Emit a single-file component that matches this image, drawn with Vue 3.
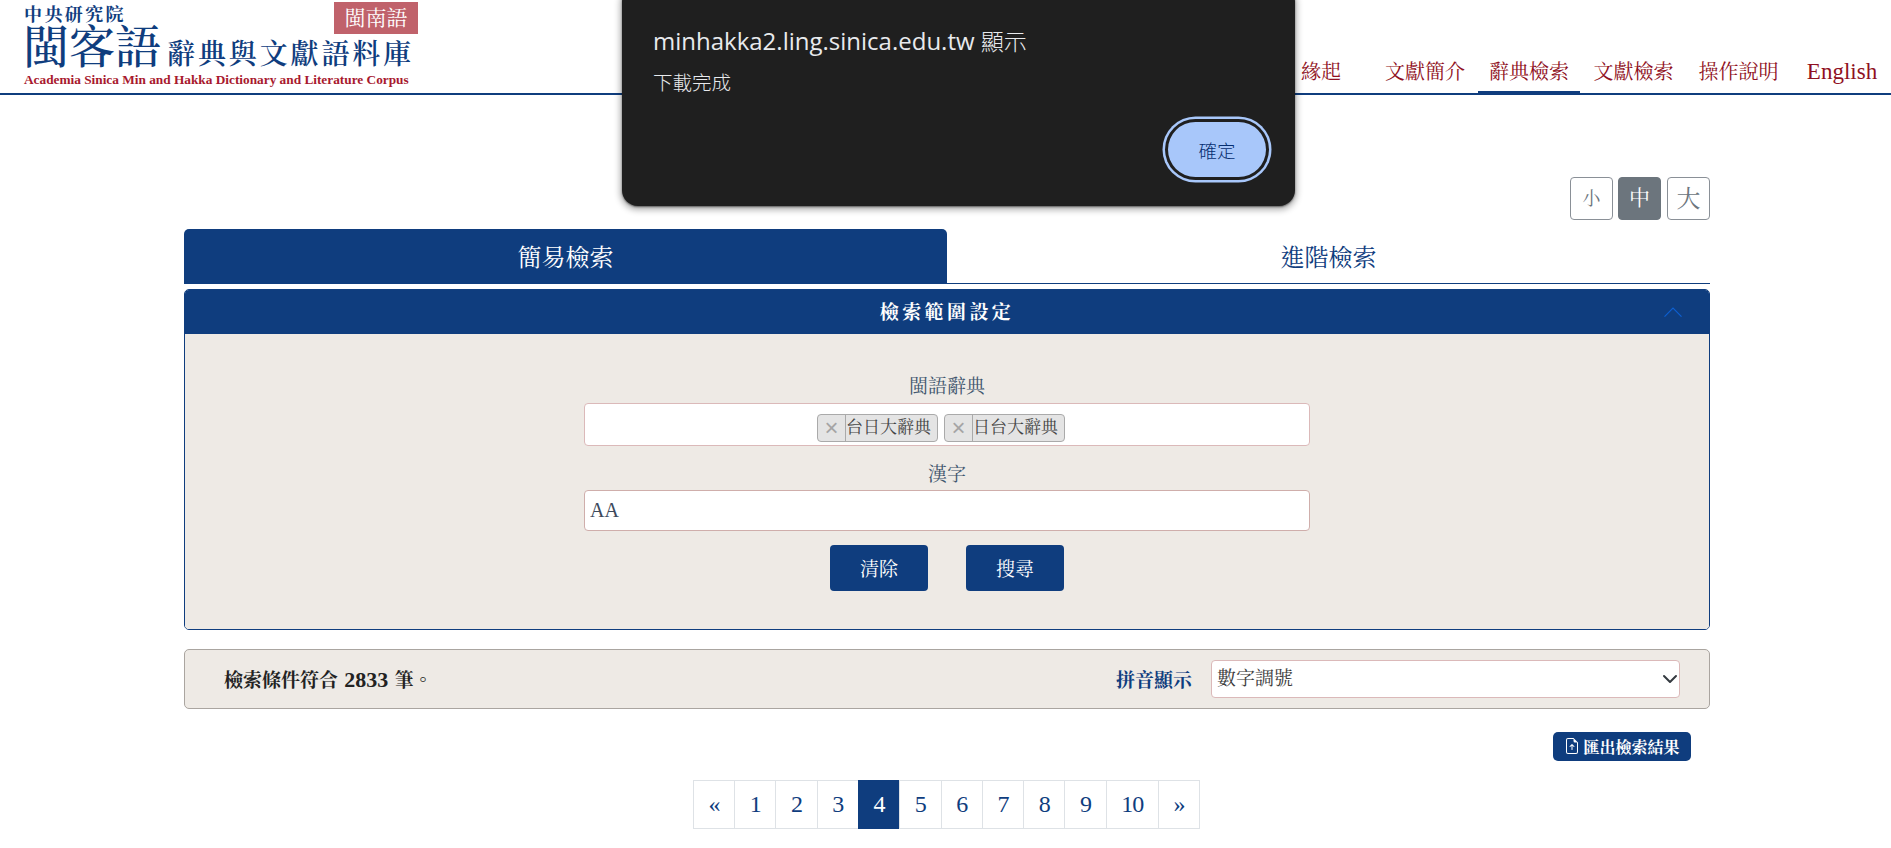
<script setup>
import { ref } from 'vue'

const navItems = [
  { label: '緣起', cls: 'n1' },
  { label: '文獻簡介', cls: 'n2' },
  { label: '辭典檢索', cls: 'n3 active' },
  { label: '文獻檢索', cls: 'n4' },
  { label: '操作說明', cls: 'n5' },
  { label: 'English', cls: 'n6' }
]
const sizes = [
  { label: '小', cls: 's-small' },
  { label: '中', cls: 's-mid on' },
  { label: '大', cls: 's-large' }
]
const dicts = ['台日大辭典', '日台大辭典']
const pages = ['«', '1', '2', '3', '4', '5', '6', '7', '8', '9', '10', '»']
const hanzi = ref('AA')
const pinyin = ref('數字調號')
</script>

<template>
  <div class="page">
    <header class="top">
      <a class="logo">
        <span class="l-org">中央研究院</span>
        <span class="l-main"><b class="l-big">閩客語</b><b class="l-sub">辭典與文獻語料庫</b></span>
        <span class="l-en">Academia Sinica Min and Hakka Dictionary and Literature Corpus</span>
        <span class="badge">閩南語</span>
      </a>
      <nav class="nav">
        <a v-for="n in navItems" :key="n.label" class="nav-item" :class="n.cls">{{ n.label }}</a>
      </nav>
    </header>

    <main class="main">
      <div class="sizes">
        <button v-for="s in sizes" :key="s.label" class="size" :class="s.cls">{{ s.label }}</button>
      </div>

      <div class="tabs">
        <a class="tab tab-on">簡易檢索</a>
        <a class="tab">進階檢索</a>
      </div>

      <section class="panel">
        <div class="panel-head">
          <span class="panel-title">檢索範圍設定</span>
          <svg class="chev" width="18" height="10" viewBox="0 0 18 10" fill="none"><path d="M0.5 9.7 9 1l8.5 8.7" stroke="#0d5fd0" stroke-width="1.1"/></svg>
        </div>
        <div class="panel-body">
          <div class="form">
            <label class="f-label">閩語辭典</label>
            <div class="multi">
              <span v-for="d in dicts" :key="d" class="chip"><i class="chip-x">×</i><span class="chip-t">{{ d }}</span></span>
            </div>
            <label class="f-label f-label2">漢字</label>
            <input v-model="hanzi" class="text-in" type="text" />
            <div class="actions">
              <button class="btn">清除</button>
              <button class="btn">搜尋</button>
            </div>
          </div>
        </div>
      </section>

      <section class="result">
        <span class="r-count">檢索條件符合 <span class="r-num">2833</span> 筆。</span>
        <div class="r-right">
          <label class="r-label">拼音顯示</label>
          <select v-model="pinyin" class="r-select">
            <option>數字調號</option>
            <option>傳統調號</option>
          </select>
        </div>
      </section>

      <div class="export-row">
        <button class="export">
          <svg width="16" height="16" viewBox="0 0 16 16" fill="#fff"><path d="M8.5 11.5a.5.5 0 0 1-1 0V7.707L6.354 8.854a.5.5 0 1 1-.708-.708l2-2a.5.5 0 0 1 .708 0l2 2a.5.5 0 0 1-.708.708L8.5 7.707V11.5z"/><path d="M14 14V4.5L9.5 0H4a2 2 0 0 0-2 2v12a2 2 0 0 0 2 2h8a2 2 0 0 0 2-2zM9.5 3A1.5 1.5 0 0 0 11 4.5h2V14a1 1 0 0 1-1 1H4a1 1 0 0 1-1-1V2a1 1 0 0 1 1-1h5.5v2z"/></svg>
          匯出檢索結果
        </button>
      </div>

      <ul class="pager">
        <li v-for="p in pages" :key="p" class="pg" :class="{ 'pg-on': p === '4' }">{{ p }}</li>
      </ul>
    </main>

    <div class="dialog">
      <div class="d-title">minhakka2.ling.sinica.edu.tw <span class="d-cjk">顯示</span></div>
      <div class="d-msg">下載完成</div>
      <div class="d-foot"><button class="d-ok">確定</button></div>
    </div>
  </div>
</template>

<style>
html, body { margin: 0; background: #fff; overflow: hidden; }
</style>

<style scoped>
.page {
  position: relative;
  width: 1891px;
  height: 848px;
  overflow: hidden;
  background: #fff;
  font-family: "Liberation Serif", "Noto Serif CJK TC", "Noto Sans CJK TC", serif;
  color: #333;
}
.top {
  height: 93px;
  border-bottom: 2px solid #0f3d7e;
  display: flex;
  justify-content: flex-end;
}
.logo {
  position: relative;
  width: 420px;
  margin-right: auto;
  padding-left: 23px;
  display: flex;
  flex-direction: column;
  color: #0f3d7e;
}
.l-org { font-size: 18px; font-weight: 700; letter-spacing: 2.4px; line-height: 20px; margin-top: 5px; margin-left: 1px; }
.l-main { display: flex; align-items: flex-end; height: 46px; }
.l-big { font-size: 46px; line-height: 46px; font-weight: 500; }
.l-sub { font-size: 28px; line-height: 33px; font-weight: 600; letter-spacing: 2.9px; margin-left: 6px; }
.l-en { font-size: 13.3px; font-weight: 700; color: #a8192e; line-height: 15px; margin-top: 1px; margin-left: 1px; white-space: nowrap; }
.badge {
  position: absolute;
  left: 334px;
  top: 2px;
  width: 84px;
  height: 32px;
  background: #c0626b;
  color: #fff;
  font-size: 21px;
  line-height: 32px;
  text-align: center;
}
.nav { display: flex; align-items: flex-end; height: 93px; }
.nav-item {
  height: 44px;
  line-height: 44px;
  margin-bottom: -1px;
  box-sizing: border-box;
  text-align: center;
  font-size: 20px;
  color: #8f1022;
  border-bottom: 3px solid transparent;
}
.n1 { width: 102px; }
.n2 { width: 106px; }
.n3 { width: 102px; }
.n4 { width: 107px; }
.n5 { width: 103px; }
.n6 { width: 101px; padding-left: 3px; font-size: 23px; }
.nav-item.active { border-bottom-color: #0f3d7e; }

.main { width: 1526px; margin-left: 184px; }
.sizes { display: flex; justify-content: flex-end; gap: 6px; padding-top: 82px; }
.size {
  width: 43px;
  height: 43px;
  padding: 0;
  border: 1px solid #8a9097;
  border-radius: 4px;
  background: #fff;
  color: #6c757d;
  font-family: inherit;
  line-height: 1;
}
.s-small { font-size: 18px; }
.s-mid { font-size: 21px; margin-left: -1px; }
.s-large { font-size: 24px; }
.size.on { background: #6c757d; color: #fff; border-color: #6c757d; }

.tabs { display: flex; margin-top: 9px; border-bottom: 1.5px solid #0f3d7e; }
.tab {
  flex: 1;
  height: 54px;
  line-height: 58px;
  text-align: center;
  font-size: 24px;
  color: #0f3d7e;
}
.tab-on { background: #0f3d7e; color: #fff; border-radius: 5px 5px 0 0; }

.panel { margin-top: 4.5px; border: 1px solid #0f3d7e; border-radius: 5px; overflow: hidden; }
.panel-head {
  position: relative;
  height: 44px;
  background: #0f3d7e;
  color: #fff;
  display: flex;
  align-items: center;
  justify-content: center;
}
.panel-title { font-size: 19px; font-weight: 700; letter-spacing: 3.4px; margin-top: -2px; }
.chev { position: absolute; right: 27px; top: 17px; }
.panel-body { background: #eeeae5; height: 295px; display: flex; justify-content: center; }
.form { width: 726px; display: flex; flex-direction: column; align-items: center; padding-top: 36px; box-sizing: border-box; }
.f-label { font-size: 19px; line-height: 34px; height: 33px; color: #41566e; }
.f-label2 { height: 32px; margin-top: 12px; }
.multi {
  width: 100%;
  height: 43px;
  box-sizing: border-box;
  background: #fff;
  border: 1px solid #dbb9b9;
  border-radius: 4px;
  display: flex;
  justify-content: center;
  align-items: center;
  gap: 6px;
  padding: 7px 12px 0 0;
}
.chip {
  display: flex;
  align-items: stretch;
  height: 28px;
  box-sizing: border-box;
  background: #e4e4e4;
  border: 1px solid #aaa;
  border-radius: 4px;
  font-size: 17px;
  line-height: 26px;
  color: #444;
}
.chip-x {
  width: 27px;
  border-right: 1px solid #aaa;
  text-align: center;
  font-style: normal;
  font-family: "Liberation Sans", sans-serif;
  font-size: 24px;
  color: #a5a5a5;
}
.chip-t { padding-right: 6px; }
.text-in {
  width: 100%;
  height: 41px;
  box-sizing: border-box;
  background: #fff;
  border: 1px solid #cfaeab;
  border-radius: 4px;
  outline: none;
  padding: 0 5px;
  font-family: inherit;
  font-size: 20px;
  color: #3d4a5c;
}
.actions { display: flex; gap: 38px; margin-top: 14px; }
.btn {
  width: 98px;
  height: 46px;
  padding: 0;
  border: 0;
  border-radius: 4px;
  background: #0f3d7e;
  color: #fff;
  font-family: inherit;
  font-size: 19px;
}

.result {
  margin-top: 19px;
  height: 60px;
  box-sizing: border-box;
  background: #eeeae5;
  border: 1px solid #aaa5a0;
  border-radius: 5px;
  display: flex;
  align-items: center;
  justify-content: space-between;
  padding: 0 29px 0 39px;
}
.r-count { font-size: 19px; font-weight: 700; color: #222; word-spacing: 1.5px; }
.r-num { font-size: 22px; }
.r-right { display: flex; align-items: center; gap: 19px; }
.r-label { font-size: 19px; font-weight: 700; color: #0f3d7e; }
.r-select {
  width: 469px;
  height: 38px;
  box-sizing: border-box;
  border: 1px solid #dbb9b9;
  border-radius: 4px;
  padding: 0 5px;
  background: #fff url("data:image/svg+xml,%3csvg xmlns='http://www.w3.org/2000/svg' viewBox='0 0 16 16'%3e%3cpath fill='none' stroke='%23343a40' stroke-linecap='round' stroke-linejoin='round' stroke-width='2' d='m2 5 6 6 6-6'/%3e%3c/svg%3e") no-repeat right 1px center / 16px 16px;
  appearance: none;
  font-family: inherit;
  font-size: 19px;
  color: #3c3c3c;
  outline: none;
}

.export-row { display: flex; justify-content: flex-end; padding: 23px 19px 0 0; }
.export {
  width: 138px;
  height: 29px;
  padding: 0;
  border: 0;
  border-radius: 5px;
  background: #0f3d7e;
  color: #fff;
  font-family: inherit;
  font-size: 16px;
  font-weight: 700;
  display: flex;
  align-items: center;
  justify-content: center;
  gap: 3px;
  white-space: nowrap;
}

.pager { list-style: none; display: flex; justify-content: center; margin: 19px 0 0; padding: 0; }
.pg {
  height: 49px;
  box-sizing: border-box;
  padding: 0 14.65px;
  margin-left: -1px;
  border: 1px solid #dee2e6;
  color: #0f3d7e;
  font-size: 24px;
  letter-spacing: -1px;
  line-height: 47px;
  text-align: center;
}
.pg-on { background: #0f3d7e; border-color: #0f3d7e; color: #fff; }

.dialog {
  position: absolute;
  left: 622px;
  top: -14px;
  width: 673px;
  height: 220px;
  box-sizing: border-box;
  padding: 14px 29px 0 31px;
  background: #1f1f1f;
  border-radius: 16px;
  box-shadow: 0 2px 6px 2px rgba(0,0,0,.3), 0 1px 2px rgba(0,0,0,.5);
  color: #e8eaed;
  font-family: "Open Sans", "Noto Sans CJK TC", sans-serif;
}
.d-title { font-size: 24px; line-height: 28px; margin-top: 27px; }
.d-cjk { font-size: 23px; font-weight: 300; }
.d-msg { font-size: 19.5px; line-height: 26px; margin-top: 15px; font-weight: 300; }
.d-foot { display: flex; justify-content: flex-end; margin-top: 26px; }
.d-ok {
  width: 98px;
  height: 55px;
  padding: 0;
  border: 0;
  border-radius: 28px;
  background: #a8c7fa;
  color: #062e6f;
  font-family: inherit;
  font-size: 18.5px;
  font-weight: 300;
  box-shadow: 0 0 0 3px #1f1f1f, 0 0 0 5.5px #a8c7fa;
}
</style>
